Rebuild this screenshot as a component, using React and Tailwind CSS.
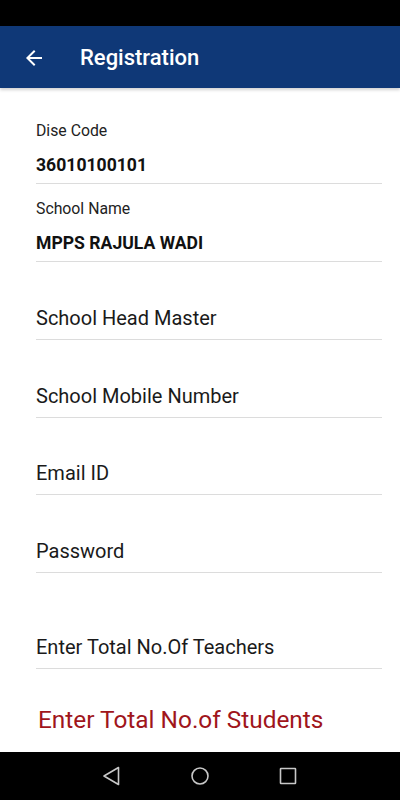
import React from 'react';

const font = { fontFamily: 'Roboto, "Noto Sans", sans-serif' };

function ReadField({ label, value, first }) {
    return (
        <div className={`${first ? 'pt-[33px]' : 'pt-[15px]'} pb-[6px] border-b border-[#dcdcdc]`}>
            <div className="text-[15.8px] leading-[20px] text-[#222]">{label}</div>
            <div className="mt-[12px] text-[17.6px] leading-[24px] font-bold text-[#111]">{value}</div>
        </div>
    );
}

function InputField({ placeholder, h }) {
    return (
        <div className={`${h} flex flex-col justify-end pb-[9px] border-b border-[#dcdcdc]`}>
            <div className="text-[20px] leading-[24px] text-[#1a1a1a]">{placeholder}</div>
        </div>
    );
}

export default function App() {
    return (
        <div className="w-[400px] h-[800px] flex flex-col bg-white overflow-hidden" style={font}>
            {/* status bar */}
            <div className="h-[26px] bg-black shrink-0" />

            {/* app bar */}
            <div className="h-[62px] bg-[#0f3877] flex items-center shrink-0 shadow-[0_2px_3px_rgba(0,0,0,0.18)] relative z-10">
                <svg className="ml-[22px] mt-[2px]" width="24" height="24" viewBox="0 0 24 24" fill="#ffffff">
                    <path d="M20 11H7.83l5.59-5.59L12 4l-8 8 8 8 1.41-1.41L7.83 13H20v-2z" />
                </svg>
                <div className="ml-[34px] text-white text-[22px] font-medium leading-[28px] mt-[2px]">Registration</div>
            </div>

            {/* form */}
            <div className="flex-1 pl-[36px] pr-[18px]">
                <ReadField label="Dise Code" value="36010100101" first />
                <ReadField label="School Name" value="MPPS RAJULA WADI" />
                <InputField placeholder="School Head Master" h="h-[78px]" />
                <InputField placeholder="School Mobile Number" h="h-[78px]" />
                <InputField placeholder="Email ID" h="h-[77px]" />
                <InputField placeholder="Password" h="h-[78px]" />
                <InputField placeholder="Enter Total No.Of Teachers" h="h-[96px]" />
                <div className="mt-[37px] ml-[2px] text-[24.4px] leading-[28px] text-[#a0151b]">Enter Total No.of Students</div>
            </div>

            {/* nav bar */}
            <div className="h-[48px] bg-black shrink-0 flex items-center justify-center gap-[64px]">
                <svg width="24" height="24" viewBox="0 0 24 24" fill="none" stroke="#c8c8c8" strokeWidth="1.6" strokeLinejoin="round">
                    <path d="M18.5 3.5 L4 12 L18.5 20.5 Z" />
                </svg>
                <svg width="24" height="24" viewBox="0 0 24 24" fill="none" stroke="#c8c8c8" strokeWidth="1.6">
                    <circle cx="12" cy="12" r="8" />
                </svg>
                <svg width="24" height="24" viewBox="0 0 24 24" fill="none" stroke="#c8c8c8" strokeWidth="1.6">
                    <rect x="4.5" y="4.5" width="15" height="15" rx="0.5" />
                </svg>
            </div>
        </div>
    );
}
